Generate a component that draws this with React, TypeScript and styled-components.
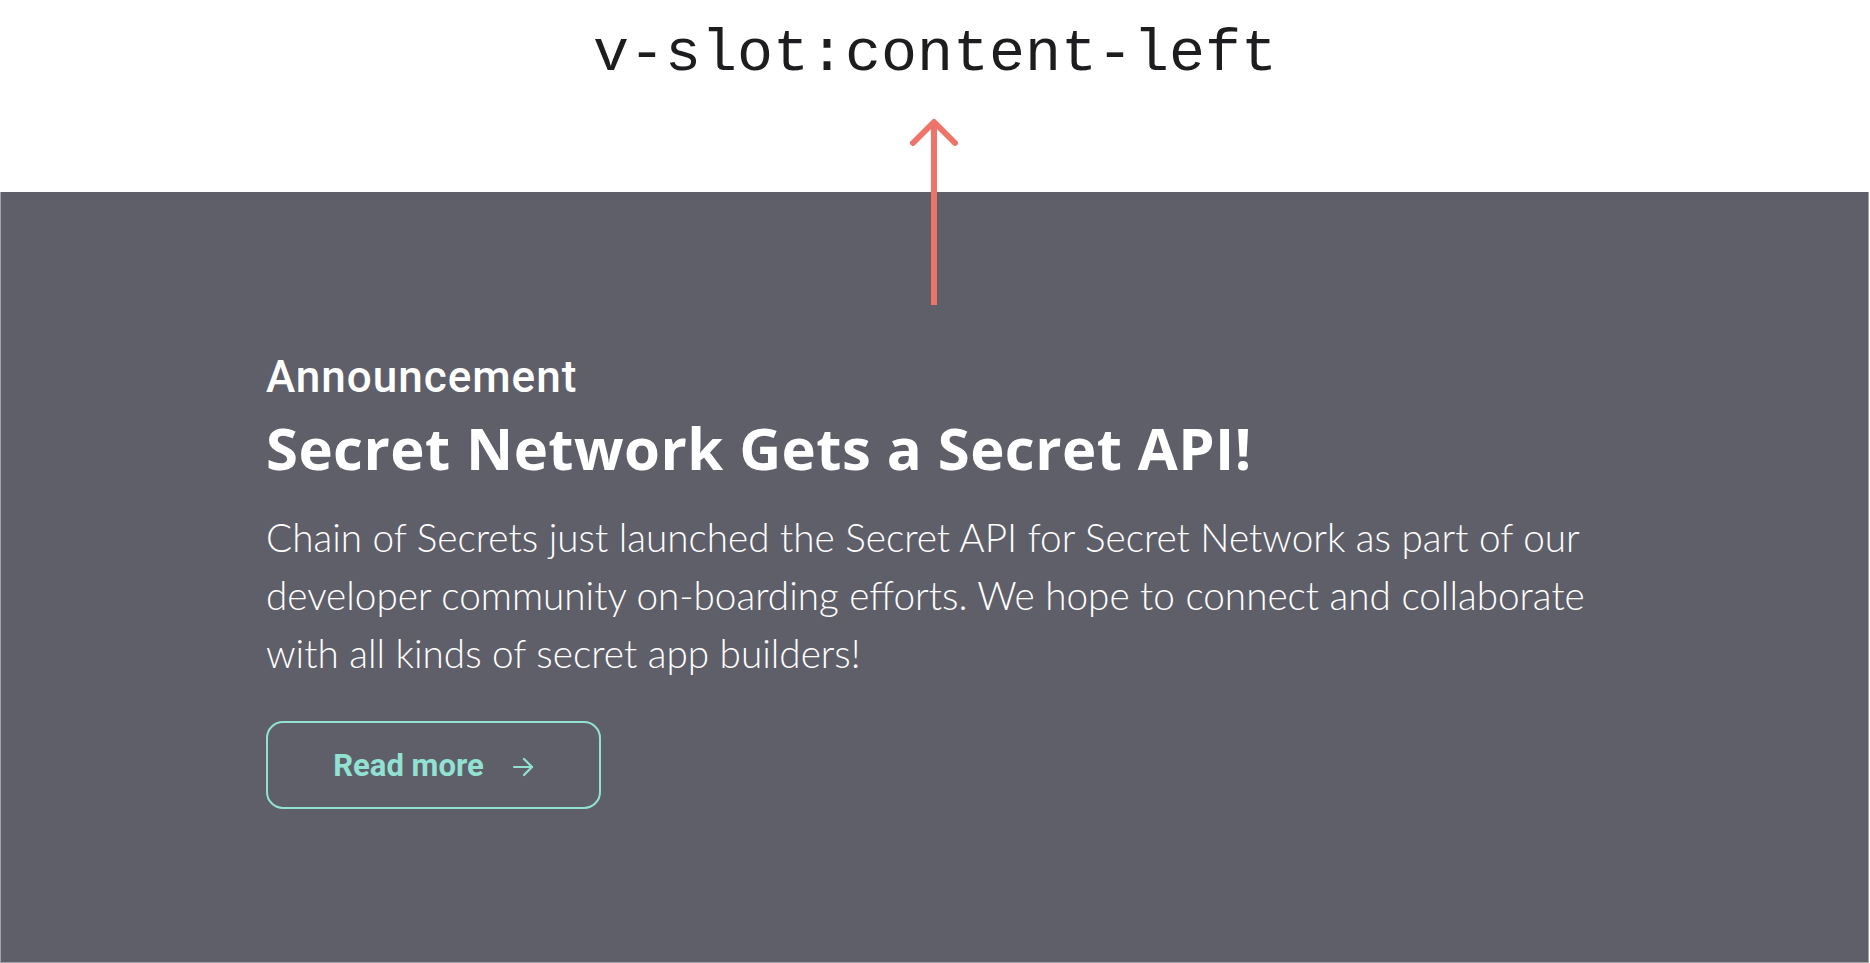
import React from "react";
import styled, { createGlobalStyle } from "styled-components";

const Global = createGlobalStyle`
  html, body { margin: 0; padding: 0; background: #ffffff; }
  body { font-family: "Liberation Sans", Arial, sans-serif; }
  * { box-sizing: border-box; }
`;

const Page = styled.div`
  position: relative;
  width: 1870px;
  height: 963px;
  display: flex;
  flex-direction: column;
  overflow: hidden;
  background: #ffffff;
`;

const Header = styled.header`
  height: 192px;
  flex: none;
  display: flex;
  justify-content: center;
  padding-top: 20px;
`;

const SlotName = styled.h1`
  margin: 0;
  font-family: "Liberation Mono", "DejaVu Sans Mono", monospace;
  font-weight: 400;
  font-size: 60px;
  line-height: 68px;
  color: #1d1d1f;
  letter-spacing: 0px;
`;

const Panel = styled.section`
  flex: 1;
  margin-right: 1px;
  background: #5f5f6a;
  border: 1px solid #a2a2a9;
  border-top: none;
  padding: 159px 0 0 265px;
  display: flex;
  flex-direction: column;
  align-items: flex-start;
`;

const Eyebrow = styled.div`
  font-family: Roboto, "Liberation Sans", sans-serif;
  font-weight: 500;
  font-size: 44px;
  line-height: 52px;
  color: #ffffff;
  letter-spacing: 1px;
`;

const Title = styled.h2`
  margin: 10px 0 0;
  font-family: "Open Sans", "Liberation Sans", sans-serif;
  font-weight: 700;
  font-size: 58px;
  line-height: 70px;
  letter-spacing: 0.45px;
  color: #ffffff;
`;

const Body = styled.p`
  margin: 25px 0 0;
  font-family: Lato, "Liberation Sans", sans-serif;
  font-weight: 300;
  font-size: 38.7px;
  line-height: 58px;
  color: #ffffff;
`;

const Line = styled.span`
  display: block;
  white-space: nowrap;
`;

const ReadMore = styled.a`
  margin-top: 39px;
  width: 335px;
  height: 88px;
  border: 2px solid #92e2d4;
  border-radius: 17px;
  display: flex;
  align-items: center;
  justify-content: center;
  gap: 28px;
  color: #92e2d4;
  font-family: Roboto, "Liberation Sans", sans-serif;
  font-weight: 700;
  font-size: 31px;
  text-decoration: none;
  cursor: pointer;
`;

const ArrowIcon = styled.svg`
  width: 22px;
  height: 22px;
  flex: none;
  margin-top: 4px;
`;

const Pointer = styled.svg`
  position: absolute;
  left: 910px;
  top: 112px;
  width: 48px;
  height: 196px;
  pointer-events: none;
`;

export default function App() {
  return (
    <Page>
      <Global />
      <Header>
        <SlotName>v-slot:content-left</SlotName>
      </Header>
      <Panel>
        <Eyebrow>Announcement</Eyebrow>
        <Title>Secret Network Gets a Secret API!</Title>
        <Body>
          <Line>Chain of Secrets just launched the Secret API for Secret Network as part of our</Line>
          <Line>developer community on-boarding efforts. We hope to connect and collaborate</Line>
          <Line>with all kinds of secret app builders!</Line>
        </Body>
        <ReadMore>
          <span>Read more</span>
          <ArrowIcon viewBox="0 0 22 22" fill="none" stroke="currentColor" strokeWidth="2.2" strokeLinecap="round" strokeLinejoin="round">
            <path d="M2 11 H20" />
            <path d="M12 3 L20 11 L12 19" />
          </ArrowIcon>
        </ReadMore>
      </Panel>
      <Pointer viewBox="0 0 48 196" fill="none" stroke="#ee7369" strokeWidth="6">
        <path d="M24 12 V193" strokeLinecap="butt" />
        <path d="M3 31 L24 10 L45 31" strokeLinecap="round" strokeLinejoin="round" />
      </Pointer>
    </Page>
  );
}
